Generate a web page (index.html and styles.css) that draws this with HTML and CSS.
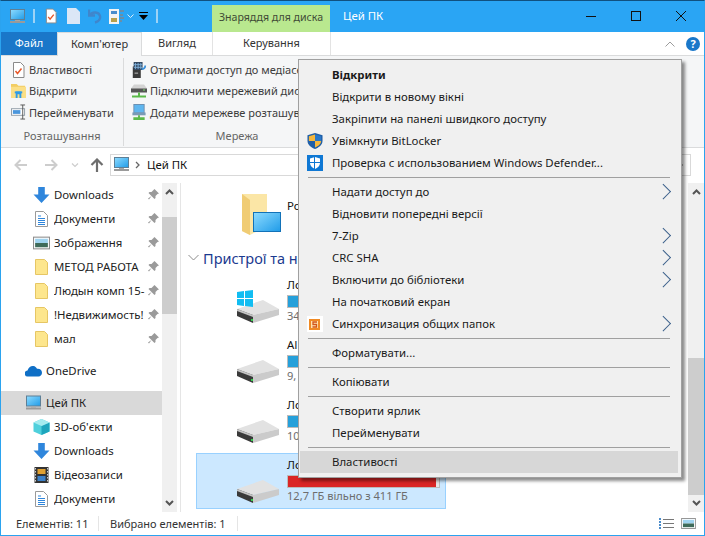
FILE: index.html
```html
<!DOCTYPE html>
<html lang="uk">

<head>
    <meta charset="UTF-8">
    <title>Цей ПК</title>
    <link rel="stylesheet" href="styles.css">
</head>

<body>
    <!-- shared icons -->
    <svg class="defs" width="0" height="0">
        <defs>
            <linearGradient id="screen" x1="0" y1="0" x2="1" y2="1">
                <stop offset="0" stop-color="#8fdcff" />
                <stop offset="1" stop-color="#1f9be8" />
            </linearGradient>
            <symbol id="i-pc" viewBox="0 0 17 15">
                <rect x="1.5" y="0.5" width="14" height="10" fill="url(#screen)" stroke="#5d7f96" />
                <rect x="6" y="11" width="5" height="1" fill="#a8a8a8" />
                <rect x="1" y="12" width="15" height="2" fill="#9a9a9a" />
            </symbol>
            <symbol id="i-doc" viewBox="0 0 13 16">
                <path d="M1.5.5h7l3.500 3.500v11.500h-10.500z" fill="#fff" stroke="#8a8a8a" />
                <path d="M3.500 9l2 2.500 4-5" fill="none" stroke="#e8582a" stroke-width="1.500" />
            </symbol>
            <symbol id="i-pin" viewBox="0 0 11 11">
                <path d="M6.500 0l4.500 4.500-1.500.5-2 2 0 2-1 1-3-3-2.500 3.500-1-1 3.500-2.500-3-3 1-1 2 0 2-2z" fill="#9a9a9a" />
            </symbol>
            <symbol id="i-folder" viewBox="0 0 13 16">
                <path d="M.5.5h9l3 3v12h-12z" fill="#fde68d" stroke="#e6c664" />
            </symbol>
            <symbol id="i-down" viewBox="0 0 17 17">
                <path d="M5 0h7v8h5l-8.500 9-8.500-9h5z" fill="#2f86dc" />
            </symbol>
            <symbol id="i-text" viewBox="0 0 13 16">
                <path d="M.5.5h8l4 4v11h-12z" fill="#fff" stroke="#9a9a9a" />
                <path d="M3 5h3M3 7.500h7M3 9.500h7M3 11.500h7M3 13.500h7" stroke="#2f86dc" />
            </symbol>
            <symbol id="i-picture" viewBox="0 0 16 12">
                <rect x=".5" y=".5" width="15" height="11" fill="#fff" stroke="#8e8e8e" />
                <rect x="2" y="2" width="12" height="4" fill="#9fd3ef" />
                <rect x="2" y="6" width="12" height="4" fill="#3f6b5a" />
            </symbol>
            <symbol id="i-drive" viewBox="0 0 42 48">
                <path d="M0 30l26-9 16 9-26 6z" fill="#e2e2e2" />
                <path d="M16 36l26-6v6l-26 8z" fill="#cbcbcb" />
                <path d="M0 30l16 6v8l-16-7z" fill="#3a3a3a" />
                <path d="M0 30l16 6v2l-16-6z" fill="#c4c4c4" />
                <rect x="14" y="40" width="2" height="2" fill="#35c94c" />
            </symbol>
        </defs>
    </svg>

    <div class="window">
        <div class="titlebar">
            <div class="qat">
                <svg class="qat-pc"><use href="#i-pc" /></svg>
                <span class="qat-sep"></span>
                <svg class="qat-doc"><use href="#i-doc" /></svg>
                <svg class="qat-page" viewBox="0 0 13 16"><path d="M0 0h9l4 4v12h-13z" fill="#dbe7f6" /></svg>
                <svg class="qat-undo" viewBox="0 0 14 16"><path d="M1 1.500v6h6M2 7c2.500-4 9-3 10 1 .7 3-1.500 5.500-5 6.500" fill="none" stroke="#3f86cc" stroke-width="2.400" /></svg>
                <svg class="qat-view" viewBox="0 0 15 15">
                    <rect width="10" height="15" fill="#f4f4f4" />
                    <rect x="2" y="2" width="6" height="3" fill="#4a8ccb" />
                    <rect x="2" y="9" width="6" height="4" fill="#b9a04a" />
                    <path d="M11 2h4M11 6h3M11 9h4M11 12h2" stroke="#a8795f" />
                </svg>
                <svg class="qat-chev" viewBox="0 0 7 4"><path d="M.5.500l3 3 3-3" fill="none" stroke="#dcecf9" /></svg>
                <svg class="qat-menu" viewBox="0 0 9 8"><path d="M0 0h9v1h-9zM0 3h9l-4.500 5z" fill="#000" /></svg>
                <span class="qat-sep qat-sep-last"></span>
            </div>
            <div class="tool-tab">Знаряддя для диска</div>
            <div class="title">Цей ПК</div>
            <div class="winbtns">
                <svg viewBox="0 0 10 10"><path d="M0 5.500h10" stroke="#111" /></svg>
                <svg viewBox="0 0 10 10"><rect x=".5" y=".5" width="9" height="9" fill="none" stroke="#111" /></svg>
                <svg viewBox="0 0 10 10"><path d="M0 0l10 10M10 0l-10 10" stroke="#111" /></svg>
            </div>
        </div>

        <div class="tabs">
            <div class="tab tab-file">Файл</div>
            <div class="tab tab-active">Комп'ютер</div>
            <div class="tab tab-view">Вигляд</div>
            <div class="tab tab-manage">Керування</div>
            <svg class="ribbon-toggle" viewBox="0 0 10 6"><path d="M.5 5.500l4.500-4.500 4.500 4.500" fill="none" stroke="#9c9c9c" /></svg>
            <div class="help">?</div>
        </div>

        <div class="ribbon">
            <div class="group group-location">
                <div class="group-row">
                    <svg class="ribbon-icon"><use href="#i-doc" /></svg>
                    Властивості
                </div>
                <div class="group-row">
                    <svg class="ribbon-icon" viewBox="0 0 16 15">
                        <path d="M0 0h6l2 2h7v2h-15z" fill="#f2cd63" />
                        <path d="M0 3h16v12h-16z" fill="#fbdf86" />
                        <path d="M5 15v-7h6v7h-2v-4h-2v4z" fill="#2f9be8" />
                        <path d="M4 8h8v2h-8z" fill="#2f9be8" />
                    </svg>
                    Відкрити
                </div>
                <div class="group-row">
                    <svg class="ribbon-icon" viewBox="0 0 16 16">
                        <rect x=".5" y="4.500" width="14" height="7" fill="#fff" stroke="#8e9aa5" />
                        <rect x="2" y="6" width="8" height="4" fill="#4a96dc" />
                        <path d="M10 .5h5M12.500 .5v15M10 15.500h5" stroke="#555" fill="none" />
                    </svg>
                    Перейменувати
                </div>
                <div class="group-label">Розташування</div>
            </div>
            <div class="group group-network">
                <div class="group-row">
                    <svg class="ribbon-icon" viewBox="0 0 16 18">
                        <rect x="1" y="5" width="9" height="13" fill="#3a3a3a" />
                        <rect x="2" y="0" width="10" height="9" fill="#33475f" />
                        <path d="M4 1v7M7 1v7M10 1v7M2 3h10M2 6h10" stroke="#7fb2dd" />
                        <path d="M11 8c3 0 4-2 4-4" stroke="#3b8fd8" stroke-width="2" fill="none" />
                        <rect x="3" y="12" width="4" height="1" fill="#ccc" />
                    </svg>
                    Отримати доступ до медіасервера
                </div>
                <div class="group-row">
                    <svg class="ribbon-icon" viewBox="0 0 16 15">
                        <path d="M3 1h10l3 4v3h-16v-3z" fill="#d3d3d3" />
                        <rect y="5" width="16" height="4" fill="#555" />
                        <rect x="12" y="6" width="2" height="1" fill="#7be06e" />
                        <path d="M7 9h2v3h-2zM1 12h14v2h-14z" fill="#5bb94a" />
                    </svg>
                    Підключити мережевий диск
                </div>
                <div class="group-row">
                    <svg class="ribbon-icon" viewBox="0 0 16 17">
                        <rect x="2" y="0" width="12" height="10" fill="#6d8fb0" />
                        <rect x="3" y="1" width="10" height="8" fill="#5fb6ef" />
                        <rect x="1" y="9" width="14" height="3" fill="#7a9ab5" />
                        <path d="M7 12h2v2h-2zM2 14h12v3h-12z" fill="#5bb94a" />
                    </svg>
                    Додати мережеве розташування
                </div>
                <div class="group-label">Мережа</div>
            </div>
        </div>

        <div class="nav">
            <svg class="nav-back" viewBox="0 0 14 12"><path d="M13 6h-11M6.500 1l-5 5 5 5" fill="none" stroke="#cdcdcd" stroke-width="2" /></svg>
            <svg class="nav-forward" viewBox="0 0 14 12"><path d="M1 6h11M7.500 1l5 5-5 5" fill="none" stroke="#cdcdcd" stroke-width="2" /></svg>
            <svg class="nav-recent" viewBox="0 0 8 5"><path d="M1 .5l3 3 3-3" fill="none" stroke="#cdcdcd" stroke-width="1.200" /></svg>
            <svg class="nav-up" viewBox="0 0 14 14"><path d="M7 14v-12M1.500 7l5.500-5.500 5.500 5.500" fill="none" stroke="#6e6e6e" stroke-width="2.200" /></svg>
            <div class="address">
                <svg class="address-pc"><use href="#i-pc" /></svg>
                <svg class="address-sep" viewBox="0 0 5 8"><path d="M1 1l3 3-3 3" fill="none" stroke="#666" stroke-width="1.300" /></svg>
                <span>Цей ПК</span>
                <svg class="address-end" viewBox="0 0 5 8"><path d="M0 0l5 4-5 4z" fill="#444" /></svg>
            </div>
        </div>

        <div class="main">
            <div class="sidebar">
                <div class="side-list">
                    <div class="side-row"><svg class="side-icon"><use href="#i-down" /></svg><span class="side-text">Downloads</span><svg class="pin"><use href="#i-pin" /></svg></div>
                    <div class="side-row"><svg class="side-icon"><use href="#i-text" /></svg><span class="side-text">Документи</span><svg class="pin"><use href="#i-pin" /></svg></div>
                    <div class="side-row"><svg class="side-icon"><use href="#i-picture" /></svg><span class="side-text">Зображення</span><svg class="pin"><use href="#i-pin" /></svg></div>
                    <div class="side-row"><svg class="side-icon"><use href="#i-folder" /></svg><span class="side-text">МЕТОД РАБОТА</span><svg class="pin"><use href="#i-pin" /></svg></div>
                    <div class="side-row"><svg class="side-icon"><use href="#i-folder" /></svg><span class="side-text">Людын комп 15-</span><svg class="pin"><use href="#i-pin" /></svg></div>
                    <div class="side-row"><svg class="side-icon"><use href="#i-folder" /></svg><span class="side-text">!Недвижимость!</span><svg class="pin"><use href="#i-pin" /></svg></div>
                    <div class="side-row"><svg class="side-icon"><use href="#i-folder" /></svg><span class="side-text">мал</span><svg class="pin"><use href="#i-pin" /></svg></div>

                    <div class="side-row side-top side-onedrive">
                        <svg class="side-icon" viewBox="0 0 17 11"><path d="M3 11a3 3 0 0 1-.500-6c.800-3 3.500-5 6-4.500 1.500.3 2.800 1.300 3.500 2.800 2.500-.500 5 1 5 4 0 2-1.500 3.700-3.500 3.700z" fill="#0f6fc6" /></svg>
                        <span>OneDrive</span>
                    </div>
                    <div class="side-row side-top side-selected">
                        <svg class="side-icon"><use href="#i-pc" /></svg>
                        <span>Цей ПК</span>
                    </div>
                    <div class="side-row">
                        <svg class="side-icon" viewBox="0 0 16 16">
                            <path d="M8 0l8 3.500v9l-8 3.500-8-3.500v-9z" fill="#4fd0dc" />
                            <path d="M8 7l8-3.500v9l-8 3.500z" fill="#1ea6bd" />
                            <path d="M8 0l8 3.500-8 3.500-8-3.500z" fill="#a5ecef" />
                        </svg>
                        <span class="side-text">3D-об'єкти</span>
                    </div>
                    <div class="side-row"><svg class="side-icon"><use href="#i-down" /></svg><span class="side-text">Downloads</span></div>
                    <div class="side-row">
                        <svg class="side-icon" viewBox="0 0 14 16">
                            <rect width="14" height="16" fill="#333" />
                            <path d="M1 1v14M13 1v14" stroke="#ccc" stroke-dasharray="1.500 1.500" />
                            <rect x="3" y="2" width="8" height="5" fill="#e0a030" />
                            <rect x="3" y="9" width="8" height="5" fill="#3b80c8" />
                        </svg>
                        <span class="side-text">Відеозаписи</span>
                    </div>
                    <div class="side-row"><svg class="side-icon"><use href="#i-text" /></svg><span class="side-text">Документи</span></div>
                </div>
                <div class="scrollbar side-scroll">
                    <svg class="scroll-arrow" viewBox="0 0 9 6"><path d="M1 5l3.500-3.500 3.500 3.500" fill="none" stroke="#555" stroke-width="2" /></svg>
                    <div class="scroll-gap-side"></div>
                    <div class="scroll-thumb side-thumb"></div>
                    <svg class="scroll-arrow scroll-end" viewBox="0 0 9 6"><path d="M1 1l3.500 3.500 3.500-3.500" fill="none" stroke="#555" stroke-width="2" /></svg>
                </div>
            </div>

            <div class="content">
                <div class="tile tile-folder">
                    <svg class="folder-big" viewBox="0 0 40 41">
                        <path d="M1 0h25v32l-17 9-8-4z" fill="#fbe6a6" />
                        <path d="M1 0l8 6v35l-8-4z" fill="#f0cc74" />
                        <rect x="12.500" y="18.500" width="27" height="19" fill="url(#screen)" stroke="#1272b8" />
                    </svg>
                    <div class="tile-name">Робочий стіл</div>
                </div>
                <div class="group-head">
                    <svg class="group-chev" viewBox="0 0 11 7"><path d="M.5 1l5 5 5-5" fill="none" stroke="#8c8c8c" /></svg>
                    <span>Пристрої та накопичувачі</span>
                </div>
                <div class="tile">
                    <svg class="drive" viewBox="0 0 42 48">
                        <use href="#i-drive" />
                        <path d="M0 13l7-1v7h-7zM8 12l8-1v8h-8zM0 20h7v7l-7-1zM8 20h8v8l-8-1z" fill="#11bdf2" />
                    </svg>
                    <div class="tile-info">
                        <div class="tile-name">Локальний диск</div>
                        <div class="bar"><div class="bar-fill"></div></div>
                        <div class="tile-sub">34</div>
                    </div>
                </div>
                <div class="tile">
                    <svg class="drive"><use href="#i-drive" /></svg>
                    <div class="tile-info">
                        <div class="tile-name">АІ</div>
                        <div class="bar"><div class="bar-fill"></div></div>
                        <div class="tile-sub">9,</div>
                    </div>
                </div>
                <div class="tile">
                    <svg class="drive"><use href="#i-drive" /></svg>
                    <div class="tile-info">
                        <div class="tile-name">Локальний диск</div>
                        <div class="bar"><div class="bar-fill"></div></div>
                        <div class="tile-sub">10</div>
                    </div>
                </div>
                <div class="tile tile-selected">
                    <svg class="drive"><use href="#i-drive" /></svg>
                    <div class="tile-info">
                        <div class="tile-name">Локальний диск</div>
                        <div class="bar"><div class="bar-fill bar-full"></div></div>
                        <div class="tile-sub">12,7 ГБ вільно з 411 ГБ</div>
                    </div>
                </div>
            </div>

            <div class="scrollbar main-scroll">
                <svg class="scroll-arrow" viewBox="0 0 9 6"><path d="M1 5l3.500-3.500 3.500 3.500" fill="none" stroke="#555" stroke-width="2" /></svg>
                <div class="scroll-gap-main"></div>
                <div class="scroll-thumb main-thumb"></div>
                <svg class="scroll-arrow scroll-end" viewBox="0 0 9 6"><path d="M1 1l3.500 3.500 3.500-3.500" fill="none" stroke="#555" stroke-width="2" /></svg>
            </div>
        </div>

        <div class="status">
            <span class="status-count">Елементів: 11</span>
            <span class="status-selected">Вибрано елементів: 1</span>
            <svg class="status-details" viewBox="0 0 16 12">
                <path d="M1 1h2M1 4h2M1 7h2M1 10h2" stroke="#4a8ccb" stroke-width="2" />
                <path d="M5 1.500h11M5 5.500h11M5 9.500h11" stroke="#777" />
            </svg>
            <svg class="status-large"><use href="#i-picture" /></svg>
        </div>

        <div class="menu">
            <div class="menu-item menu-default"><span class="menu-icon"></span>Відкрити</div>
            <div class="menu-item"><span class="menu-icon"></span>Відкрити в новому вікні</div>
            <div class="menu-item"><span class="menu-icon"></span>Закріпити на панелі швидкого доступу</div>
            <div class="menu-item">
                <svg class="menu-icon" viewBox="0 0 16 17">
                    <path d="M8 0l8 2.500v6c0 4-4 7-8 8.500-4-1.500-8-4.500-8-8.500v-6z" fill="#1f5fa8" />
                    <path d="M8 1.500v7h-6.500v-5z" fill="#f6b73c" />
                    <path d="M8 8.500h6.500c0 3-3 5.500-6.500 7z" fill="#f6b73c" />
                    <path d="M8 1.500l6.500 2v5h-6.500z" fill="#2a78c8" />
                </svg>
                Увімкнути BitLocker
            </div>
            <div class="menu-item">
                <svg class="menu-icon" viewBox="0 0 16 16">
                    <rect width="16" height="16" fill="#0f78d4" />
                    <path d="M8 2l5 1.500v4.500c0 3-2.500 5-5 6-2.500-1-5-3-5-6v-4.500z" fill="#fff" />
                    <path d="M7.500 2v12M3 7.500h10" stroke="#0f78d4" />
                </svg>
                Проверка с использованием Windows Defender...
            </div>
            <div class="menu-sep"></div>
            <div class="menu-item menu-sub"><span class="menu-icon"></span>Надати доступ до</div>
            <div class="menu-item"><span class="menu-icon"></span>Відновити попередні версії</div>
            <div class="menu-item menu-sub"><span class="menu-icon"></span>7-Zip</div>
            <div class="menu-item menu-sub"><span class="menu-icon"></span>CRC SHA</div>
            <div class="menu-item menu-sub"><span class="menu-icon"></span>Включити до бібліотеки</div>
            <div class="menu-item"><span class="menu-icon"></span>На початковий екран</div>
            <div class="menu-item menu-sub">
                <svg class="menu-icon" viewBox="0 0 16 16">
                    <rect width="16" height="16" fill="#fff" />
                    <rect x="2" y="3" width="11" height="11" fill="#f08a24" />
                    <rect x="4" y="5" width="7" height="7" fill="#ffe3b0" />
                    <path d="M10 6h-4v2.500h3.500v2.500h-4" fill="none" stroke="#d2561a" stroke-width="1.300" />
                </svg>
                Синхронизация общих папок
            </div>
            <div class="menu-sep"></div>
            <div class="menu-item"><span class="menu-icon"></span>Форматувати...</div>
            <div class="menu-sep"></div>
            <div class="menu-item"><span class="menu-icon"></span>Копіювати</div>
            <div class="menu-sep"></div>
            <div class="menu-item"><span class="menu-icon"></span>Створити ярлик</div>
            <div class="menu-item"><span class="menu-icon"></span>Перейменувати</div>
            <div class="menu-sep"></div>
            <div class="menu-item menu-hover"><span class="menu-icon"></span>Властивості</div>
        </div>
    </div>
</body>

</html>
```

FILE: styles.css
```css
* {
    box-sizing: border-box;
}

body {
    margin: 0;
    font-family: "Noto Sans", "Open Sans", sans-serif;
    font-size: 11.4px;
    color: #222;
}

.defs {
    position: absolute;
}

.window {
    position: relative;
    display: flex;
    flex-direction: column;
    width: 705px;
    height: 536px;
    overflow: hidden;
    background-color: white;
    border: 1px solid #2ba3ef;
    border-top-color: #10507f;
}

/* title bar */
.titlebar {
    display: flex;
    flex: none;
    height: 31px;
    background-color: #2aa5f4;
}

.qat {
    display: flex;
    align-items: center;
    width: 211px;
    height: 30px;
    padding-left: 8px;
}

.qat-pc {
    width: 17px;
    height: 15px;
}

.qat-sep {
    width: 2px;
    height: 14px;
    margin-left: 7px;
    background-color: #9dd3f6;
}

.qat-doc {
    width: 12px;
    height: 16px;
    margin-left: 10px;
}

.qat-page {
    width: 13px;
    height: 16px;
    margin-left: 10px;
}

.qat-undo {
    width: 14px;
    height: 16px;
    margin-left: 8px;
}

.qat-view {
    width: 15px;
    height: 15px;
    margin-left: 7px;
}

.qat-chev {
    width: 7px;
    height: 4px;
    margin-left: 3px;
}

.qat-menu {
    width: 9px;
    height: 8px;
    margin-left: 5px;
}

.qat-sep-last {
    margin-left: 8px;
}

.tool-tab {
    width: 118px;
    margin-top: 4px;
    text-align: center;
    white-space: nowrap;
    font-size: 10.6px;
    line-height: 25px;
    color: #3f4a36;
    background-color: #b9e88f;
}

.title {
    padding-left: 13px;
    line-height: 29px;
    color: white;
}

.winbtns {
    display: flex;
    gap: 35px;
    align-items: center;
    height: 30px;
    margin-left: auto;
    padding-right: 18px;
}

.winbtns svg {
    width: 10px;
    height: 10px;
}

/* tabs */
.tabs {
    display: flex;
    flex: none;
    align-items: center;
    height: 23px;
    font-size: 11px;
}

.tab {
    height: 23px;
    line-height: 22px;
    text-align: center;
    white-space: nowrap;
    color: #333;
}

.tab-file {
    width: 56px;
    color: white;
    background-color: #1a77c9;
}

.tab-active {
    position: relative;
    z-index: 1;
    width: 85px;
    height: 24px;
    align-self: flex-start;
    background-color: #f5f6f7;
    border: 1px solid #dadbdc;
    border-bottom: none;
}

.tab-view {
    width: 70px;
}

.tab-manage {
    width: 119px;
    border-left: 1px solid #e3e3e3;
    border-right: 1px solid #e3e3e3;
}

.ribbon-toggle {
    width: 10px;
    height: 6px;
    margin-left: auto;
}

.help {
    width: 14px;
    height: 14px;
    margin: 0 4px 0 11px;
    text-align: center;
    font-size: 11px;
    font-weight: 700;
    line-height: 14px;
    color: white;
    background-color: #1a77c9;
    border-radius: 50%;
}

/* ribbon */
.ribbon {
    display: flex;
    flex: none;
    height: 93px;
    font-size: 11px;
    background-color: #f5f6f7;
    border-top: 1px solid #dadbdc;
    border-bottom: 1px solid #dadbdc;
}

.group {
    display: flex;
    flex-direction: column;
    height: 88px;
    margin-top: 2px;
    padding-top: 1px;
    white-space: nowrap;
    color: #3c3c3c;
}

.group-location {
    width: 123px;
    padding-left: 10px;
    border-right: 1px solid #dadbdc;
}

.group-network {
    width: 226px;
    padding-left: 7px;
}

.group-row {
    display: flex;
    gap: 3px;
    align-items: center;
    height: 22px;
}

.ribbon-icon {
    flex: none;
    width: 15px;
    height: 16px;
}

.group-network .ribbon-icon {
    width: 16px;
}

.group-label {
    padding-top: 3px;
    text-align: center;
    line-height: 20px;
    color: #666;
}

.group-location .group-label {
    margin-left: -10px;
}

.group-network .group-label {
    margin-left: -7px;
}

/* address bar */
.nav {
    display: flex;
    flex: none;
    align-items: center;
    height: 35px;
    padding: 6px 13px 7px 13px;
    color: #111;
}

.nav-back,
.nav-forward {
    width: 14px;
    height: 12px;
}

.nav-forward {
    margin-left: 16px;
}

.nav-recent {
    width: 8px;
    height: 5px;
    margin-left: 13px;
}

.nav-up {
    width: 14px;
    height: 14px;
    margin-left: 11px;
}

.address {
    display: flex;
    flex: 1;
    align-items: center;
    height: 22px;
    margin-left: 6px;
    padding: 0 7px 1px 2px;
    border: 1px solid #d9d9d9;
}

.address-pc {
    width: 17px;
    height: 15px;
}

.address-sep {
    width: 5px;
    height: 8px;
    margin: 0 7px 0 5px;
}

.address-end {
    width: 5px;
    height: 8px;
    margin-left: auto;
}

/* main area */
.main {
    display: flex;
    flex: 1;
    min-height: 0;
}

.sidebar {
    display: flex;
    flex: none;
    width: 180px;
    border-right: 1px solid #e5e5e5;
}

.side-list {
    width: 161px;
    overflow: hidden;
}

.side-row {
    display: flex;
    align-items: center;
    height: 24px;
    padding: 0 0 1px 32px;
    white-space: nowrap;
}

.side-icon {
    flex: none;
    width: 17px;
    height: 16px;
    margin-right: 4px;
}

.side-text {
    width: 92px;
    overflow: hidden;
}

.pin {
    flex: none;
    width: 11px;
    height: 11px;
    margin-left: 2px;
}

.side-top {
    padding-left: 24px;
}

.side-onedrive {
    margin-top: 8px;
}

.side-selected {
    margin-top: 8px;
    background-color: #d9d9d9;
}

.scrollbar {
    display: flex;
    flex-direction: column;
    flex: none;
    align-items: center;
    background-color: #f0f0f0;
}

.side-scroll {
    width: 15px;
}

.scroll-arrow {
    flex: none;
    width: 9px;
    height: 6px;
    margin-top: 6px;
}

.scroll-end {
    margin-top: auto;
    margin-bottom: 6px;
}

.scroll-thumb {
    width: 100%;
    background-color: #cdcdcd;
}

.scroll-gap-side {
    height: 22px;
}

.side-thumb {
    height: 97px;
}

.scroll-gap-main {
    height: 163px;
}

.main-thumb {
    height: 137px;
}

.main-scroll {
    width: 16px;
}

/* drive tiles */
.content {
    flex: 1;
    min-width: 0;
    overflow: hidden;
    padding-left: 7px;
}

.tile {
    display: flex;
    gap: 8px;
    width: 250px;
    height: 56px;
    margin: 0 0 4px 8px;
    padding: 6px 0 0 41px;
    white-space: nowrap;
}

.tile-folder {
    position: relative;
    height: 60px;
    margin-bottom: 4px;
    padding: 15px 0 0 91px;
}

.folder-big {
    position: absolute;
    left: 45px;
    top: 11px;
    width: 40px;
    height: 41px;
}

.group-head {
    display: flex;
    gap: 4px;
    align-items: center;
    height: 22px;
    padding-bottom: 1px;
    white-space: nowrap;
    font-size: 14.5px;
    color: #1c3a8f;
}

.group-chev {
    width: 11px;
    height: 7px;
}

.group-head + .tile {
    margin-top: 4px;
}

.drive {
    flex: none;
    width: 42px;
    height: 48px;
}

.tile-info {
    width: 153px;
    margin-top: -2px;
}

.tile-name {
    line-height: 16px;
    color: #111;
}

.bar {
    height: 13px;
    margin-top: 2px;
    background-color: #e6e6e6;
    border: 1px solid #bcbcbc;
}

.bar-fill {
    width: 85%;
    height: 100%;
    background-color: #26a0da;
}

.bar-full {
    width: 98%;
    background-color: #da2626;
}

.tile-sub {
    font-size: 11.1px;
    line-height: 16px;
    color: #6d6d6d;
}

.tile-selected {
    padding: 5px 0 0 40px;
    background-color: #cce8ff;
    border: 1px solid #99d1ff;
}

/* status bar */
.status {
    display: flex;
    flex: none;
    align-items: center;
    height: 23px;
    padding-left: 15px;
    font-size: 11px;
    color: #333;
}

.status-count {
    width: 83px;
    border-right: 1px solid #e5e5e5;
}

.status-selected {
    width: 139px;
    padding-left: 11px;
    border-right: 1px solid #e5e5e5;
}

.status-details {
    width: 16px;
    height: 12px;
    margin-left: auto;
}

.status-large {
    width: 15px;
    height: 11px;
    margin: 0 8px 0 7px;
}

/* context menu */
.menu {
    position: absolute;
    left: 297px;
    top: 58px;
    z-index: 2;
    width: 384px;
    padding: 4px 3px 4px 1px;
    color: #1a1a1a;
    background-color: #f0f0f0;
    border: 1px solid #a0a0a0;
    box-shadow: 3px 3px 3px rgba(0, 0, 0, 0.45);
}

.menu-item {
    position: relative;
    display: flex;
    gap: 9px;
    align-items: center;
    height: 22px;
    padding: 0 8px 1px 7px;
}

.menu-icon {
    flex: none;
    width: 16px;
    height: 16px;
}

.menu-default {
    font-weight: 700;
}

.menu-hover {
    background-color: #d7d7d7;
}

.menu-sep {
    height: 1px;
    margin: 3px 8px;
    background-color: #a0a0a0;
}

.menu-sub::after {
    content: "";
    width: 9.5px;
    height: 9.5px;
    margin-left: auto;
    margin-right: 2px;
    border-top: 1px solid #3a5f8a;
    border-right: 1px solid #3a5f8a;
    transform: rotate(45deg);
}
```
